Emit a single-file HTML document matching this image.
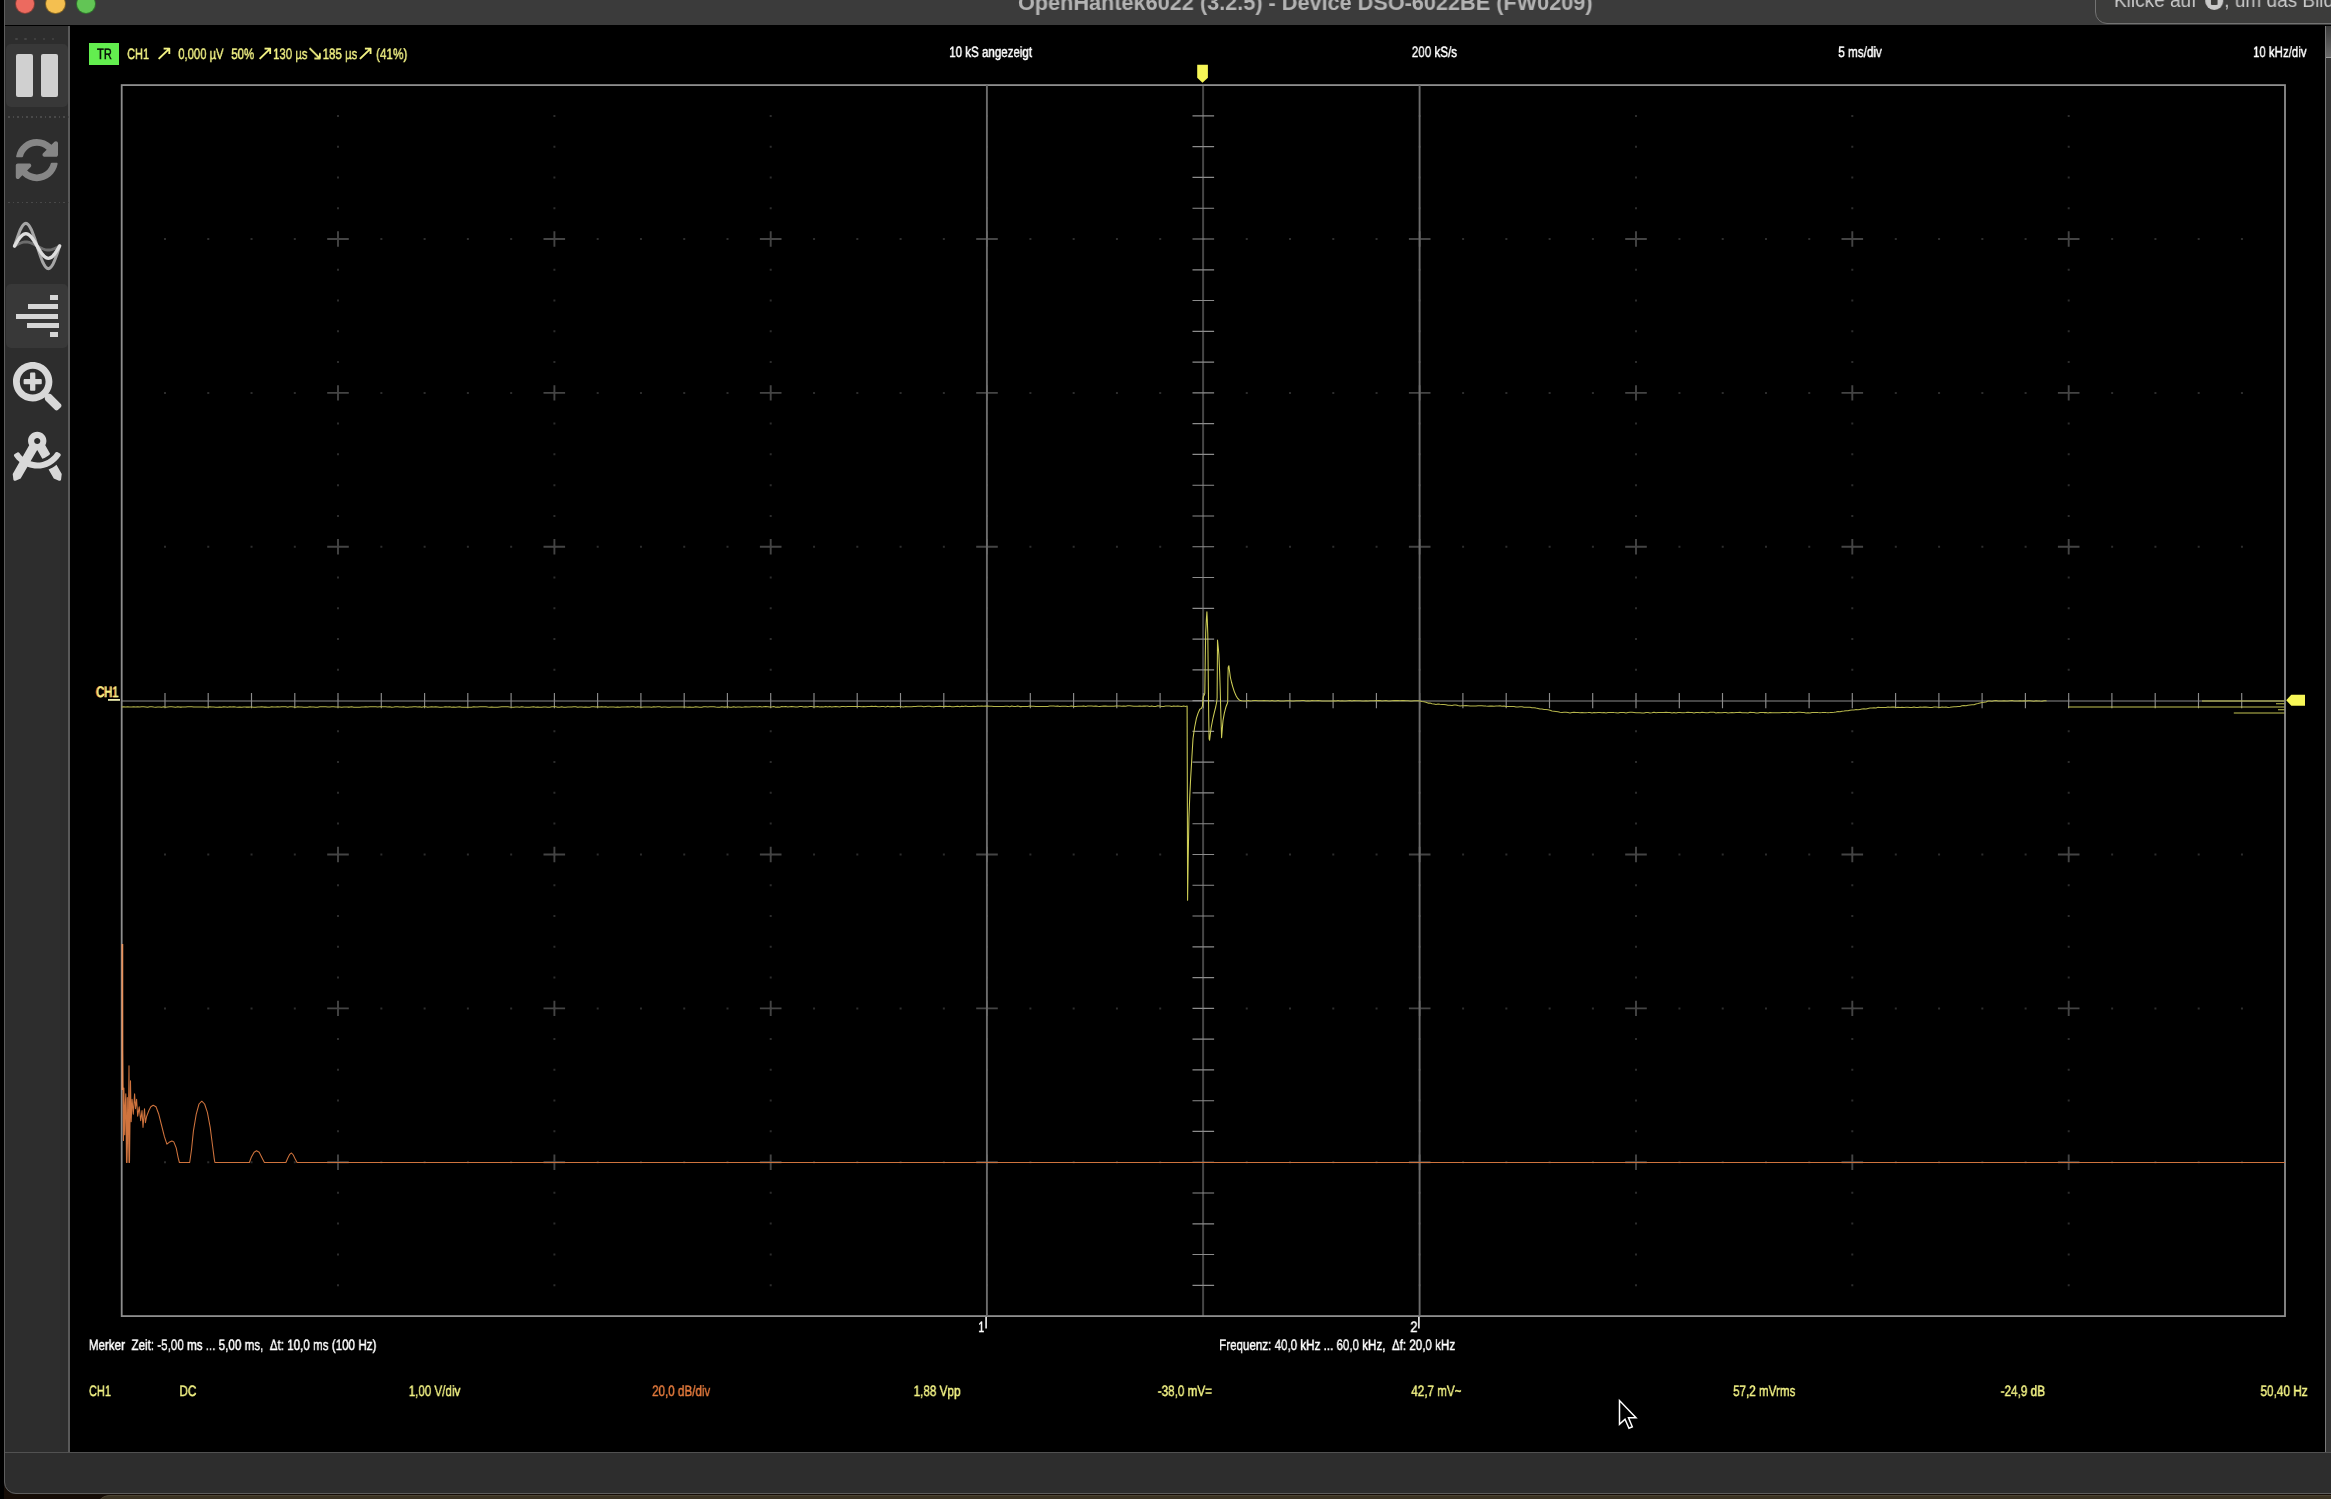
<!DOCTYPE html>
<html lang="de"><head><meta charset="utf-8"><title>OpenHantek6022</title>
<style>
html,body{margin:0;padding:0;background:#000}
body{width:2331px;height:1499px;position:relative;overflow:hidden;font-family:"Liberation Sans","DejaVu Sans",sans-serif}
#desk{position:absolute;left:4px;top:1480px;width:2331px;height:19px;background:#150c06}
#desk2{position:absolute;left:96px;top:1495px;width:2300px;height:30px;border-radius:14px;background:#3b3323;border-top:1px solid #4d4535}
#win{position:absolute;left:4px;top:-40px;width:2400px;height:1533.5px;background:#000;border-radius:0 0 0 12px;overflow:hidden;}
#winborder{position:absolute;left:4px;top:-40px;width:2400px;height:1533.8px;box-sizing:border-box;border:1.3px solid #5e5e5e;border-radius:0 0 0 12px;z-index:5;pointer-events:none}
#title{position:absolute;left:0;top:40px;width:100%;height:25px;background:#3b3b3b}
#tl span{position:absolute;top:-5.5px;width:18.4px;height:18.4px;border-radius:50%}
#ttext{will-change:transform;position:absolute;left:1013.6px;top:-10.3px;font-weight:bold;font-size:22px;color:#b4b4b4;white-space:nowrap;transform-origin:0 0;transform:scaleX(0.985)}
#tip{position:absolute;left:2090.6px;top:-20px;width:300px;height:43.5px;background:#3c3c3b;border:1px solid #737373;border-radius:0 0 0 12px;box-sizing:border-box}
#tiptext{will-change:transform;position:absolute;left:2110px;top:-10.9px;font-size:20px;color:#c9c9c9;white-space:nowrap;transform-origin:0 0;transform:scaleX(0.95)}
#rec{display:inline-block;width:19px;height:18px;border-radius:50%;background:#c9c9c9;vertical-align:-3px;position:relative;margin:0 1px 0 3.8px}
#rec i{position:absolute;left:5.8px;top:5.5px;width:7.4px;height:7px;background:#3c3c3b;border-radius:1px}
#side{position:absolute;left:1px;top:66px;width:63px;height:1427px;background:#2d2d2d;border-right:2px solid #595959}
#status{position:absolute;left:0;top:1492px;width:100%;height:42px;background:#2d2d2d;border-top:1px solid #515151}
#rpanel{position:absolute;left:2321px;top:66px;width:20px;height:1427px;background:#343434;border-left:1.5px solid #7a7a7a}
#rpanel div{height:31px;background:linear-gradient(#3c3c3c,#6a6a6a);border-bottom:1.5px solid #9a9a9a}
.btnbg{position:absolute;left:1px;width:62px;background:#383838;border-radius:5px}
.sep{position:absolute;left:3.2px;width:61px;height:1.6px;background:repeating-linear-gradient(90deg,#494949 0,#494949 1.6px,transparent 1.6px,transparent 4.6px)}
.hd{position:absolute;top:11.5px;width:2.6px;height:2.6px;border-radius:50%;background:#454545}
.pb{position:absolute;top:28px;width:17.5px;height:43px;border-radius:2px;background:#d0d0d0}
.sb{position:absolute;height:5.1px;background:#d6d6d6}
svg{position:absolute;left:0;top:0}
.t{position:absolute;left:0;top:0;will-change:transform;white-space:nowrap;-webkit-text-stroke:0.45px;text-rendering:geometricPrecision;line-height:1;transform-origin:0 0;letter-spacing:0}
.ar{font-family:"DejaVu Sans",sans-serif;font-size:21px;-webkit-text-stroke:0}
</style></head><body>
<div id="desk"></div><div id="desk2"></div>
<div id="win">
 <div id="title">
  <div id="tl"><span style="left:11.9px;background:#ec6a5f;box-shadow:0 0 0 0.9px #8e4038"></span><span style="left:42.2px;background:#f4bf50;box-shadow:0 0 0 0.9px #8a6a24"></span><span style="left:72.6px;background:#62c555;box-shadow:0 0 0 0.9px #2f7a2c"></span></div>
  <div id="ttext">OpenHantek6022 (3.2.5) - Device DSO-6022BE (FW0209)</div>
  <div id="tip"></div>
  <div id="tiptext">Klicke auf <span id="rec"><i></i></span>, um das Bildschirmvideo zu stoppen</div>
 </div>
 <div id="side">
  <i class="hd" style="left:10.2px"></i><i class="hd" style="left:19.4px"></i><i class="hd" style="left:28.6px"></i><i class="hd" style="left:37.7px"></i><i class="hd" style="left:46.9px"></i>
  <div class="btnbg" style="top:17.5px;height:63px"></div>
  <i class="pb" style="left:10.8px"></i><i class="pb" style="left:35.7px"></i>
  <div class="sep" style="top:90.3px"></div> <div class="sep" style="top:175.7px"></div>
  <div class="btnbg" style="top:258px;height:64px"></div>
  <i class="sb" style="left:44.7px;top:269px;width:8.8px"></i>
  <i class="sb" style="left:22.7px;top:278.2px;width:30.8px"></i>
  <i class="sb" style="left:10.8px;top:287.5px;width:42.7px"></i>
  <i class="sb" style="left:22px;top:296.9px;width:31.5px"></i>
  <i class="sb" style="left:44.7px;top:306.2px;width:8.8px"></i>
 </div>
 <div id="rpanel"><div></div></div>
 <div id="status"></div>
</div>
<div id="winborder"></div>
<svg width="2331" height="1499" viewBox="0 0 2331 1499">
 <g transform="translate(15.1 138.3) scale(0.0851)"><path fill="#868686" d="M370.72 133.28C339.458 104.008 298.888 87.962 255.848 88c-77.458.068-144.328 53.178-162.791 126.85-1.344 5.363-6.122 9.15-11.651 9.15H24.103c-7.498 0-13.194-6.807-11.807-14.176C33.933 94.924 134.813 8 256 8c66.448 0 126.791 26.136 171.315 68.685L463.03 40.97C478.149 25.851 504 36.559 504 57.941V192c0 13.255-10.745 24-24 24H345.941c-21.382 0-32.09-25.851-16.971-40.971l41.75-41.749zM32 296h134.059c21.382 0 32.09 25.851 16.971 40.971l-41.75 41.75c31.262 29.273 71.835 45.319 114.876 45.28 77.418-.07 144.315-53.144 162.787-126.849 1.344-5.363 6.122-9.15 11.651-9.15h57.304c7.498 0 13.194 6.807 11.807 14.176C478.067 417.076 377.187 504 256 504c-66.448 0-126.791-26.136-171.315-68.685L48.97 471.03C33.851 486.149 8 475.441 8 454.059V320c0-13.255 10.745-24 24-24z"/></g>
 <g fill="none" stroke-linecap="round"><path d="M14.6 246 15.7 245.4 16.9 244.8 18 244.2 19.1 243.6 20.2 243.2 21.4 242.8 22.5 242.4 23.6 242.2 24.7 242 25.9 242 27 242 28.1 242.2 29.2 242.4 30.3 242.8 31.5 243.2 32.6 243.6 33.7 244.2 34.9 244.8 36 245.4 37.1 246 38.2 246.6 39.4 247.2 40.5 247.8 41.6 248.4 42.7 248.8 43.9 249.2 45 249.6 46.1 249.8 47.2 250 48.4 250 49.5 250 50.6 249.8 51.7 249.6 52.9 249.2 54 248.8 55.1 248.4 56.2 247.8 57.4 247.2 58.5 246.6 59.6 246" stroke="#6c6c6c" stroke-width="2.8"/><path d="M14.6 246 15.7 242.5 16.9 239 18 235.7 19.1 232.7 20.2 230 21.4 227.7 22.5 225.9 23.6 224.5 24.7 223.7 25.9 223.4 27 223.7 28.1 224.5 29.2 225.9 30.3 227.7 31.5 230 32.6 232.7 33.7 235.7 34.9 239 36 242.5 37.1 246 38.2 249.5 39.4 253 40.5 256.3 41.6 259.3 42.7 262 43.9 264.3 45 266.1 46.1 267.5 47.2 268.3 48.4 268.6 49.5 268.3 50.6 267.5 51.7 266.1 52.9 264.3 54 262 55.1 259.3 56.2 256.3 57.4 253 58.5 249.5 59.6 246" stroke="#a6a6a6" stroke-width="3"/><path d="M14.6 246 15.7 244.1 16.9 242.2 18 240.4 19.1 238.8 20.2 237.3 21.4 236 22.5 235 23.6 234.3 24.7 233.9 25.9 233.7 27 233.9 28.1 234.3 29.2 235 30.3 236 31.5 237.3 32.6 238.8 33.7 240.4 34.9 242.2 36 244.1 37.1 246 38.2 247.9 39.4 249.8 40.5 251.6 41.6 253.2 42.7 254.7 43.9 256 45 257 46.1 257.7 47.2 258.1 48.4 258.3 49.5 258.1 50.6 257.7 51.7 257 52.9 256 54 254.7 55.1 253.2 56.2 251.6 57.4 249.8 58.5 247.9 59.6 246" stroke="#dedede" stroke-width="3.4"/></g>
 <g transform="translate(13 362) scale(0.0947)"><path fill="#d8d8d8" d="M304 192v32c0 6.6-5.4 12-12 12h-56v56c0 6.6-5.4 12-12 12h-32c-6.6 0-12-5.4-12-12v-56h-56c-6.6 0-12-5.4-12-12v-32c0-6.6 5.4-12 12-12h56v-56c0-6.6 5.4-12 12-12h32c6.6 0 12 5.4 12 12v56h56c6.6 0 12 5.4 12 12zm201 284.7L476.7 505c-9.4 9.4-24.6 9.4-33.9 0L343 405.3c-4.5-4.5-7-10.6-7-17V372c-35.3 27.600-79.700 44-128 44C93.100 416 0 322.900 0 208S93.100 0 208 0s208 93.100 208 208c0 48.300-16.400 92.700-44 128h16.300c6.400 0 12.500 2.500 17 7l99.700 99.700c9.300 9.400 9.300 24.600 0 34zM344 208c0-75.200-60.800-136-136-136S72 132.800 72 208s60.800 136 136 136 136-60.800 136-136z"/></g>
 <g transform="translate(12.7 431.8) scale(0.0958)"><path fill="#d8d8d8" d="M457.01 344.42c-25.05 20.33-52.63 37.18-82.54 49.05l54.38 94.19 53.95 23.040c9.810 4.190 20.890-2.210 22.170-12.800l7.020-58.250-54.980-95.230zm42.490-94.560c4.860-7.670 1.890-17.990-6.050-22.390l-28.070-15.570c-7.480-4.150-16.610-1.460-21.260 5.720C403.010 281.150 332.250 320 256 320c-23.930 0-47.230-4.250-69.410-11.530l67.360-116.680c.7.020 1.340.21 2.040.21s1.350-.19 2.040-.21l51.090 88.500c31.230-8.960 59.560-25.750 82.610-48.920l-51.790-89.710C347.390 128.030 352 112.630 352 96c0-53.020-42.980-96-96-96s-96 42.980-96 96c0 16.630 4.610 32.030 12.050 45.660l-68.300 118.310c-12.550-11.610-23.960-24.590-33.680-39-4.790-7.100-13.970-9.620-21.380-5.330l-27.750 16.070c-7.850 4.540-10.630 14.900-5.640 22.470 15.570 23.640 34.690 44.210 55.980 62.020L0 439.660l7.020 58.250c1.280 10.590 12.360 16.990 22.170 12.800l53.950-23.040 70.800-122.630C186.130 377.280 220.620 384 256 384c99.050 0 190.880-51.010 243.500-134.140zM256 64c17.670 0 32 14.330 32 32s-14.330 32-32 32-32-14.330-32-32 14.330-32 32-32z"/></g>
 <g stroke="#2c2c2c" stroke-width="2" fill="none"><line x1="164" y1="239" x2="2284" y2="239" stroke-dasharray="2 41.27"/><line x1="164" y1="392.9" x2="2284" y2="392.9" stroke-dasharray="2 41.27"/><line x1="164" y1="546.7" x2="2284" y2="546.7" stroke-dasharray="2 41.27"/><line x1="164" y1="854.5" x2="2284" y2="854.5" stroke-dasharray="2 41.27"/><line x1="164" y1="1008.4" x2="2284" y2="1008.4" stroke-dasharray="2 41.27"/><line x1="164" y1="1162.2" x2="2284" y2="1162.2" stroke-dasharray="2 41.27"/><line x1="338" y1="114.9" x2="338" y2="1315.1" stroke-dasharray="2 28.77"/><line x1="554.4" y1="114.9" x2="554.4" y2="1315.1" stroke-dasharray="2 28.77"/><line x1="770.7" y1="114.9" x2="770.7" y2="1315.1" stroke-dasharray="2 28.77"/><line x1="987" y1="114.9" x2="987" y2="1315.1" stroke-dasharray="2 28.77"/><line x1="1419.7" y1="114.9" x2="1419.7" y2="1315.1" stroke-dasharray="2 28.77"/><line x1="1636" y1="114.9" x2="1636" y2="1315.1" stroke-dasharray="2 28.77"/><line x1="1852.3" y1="114.9" x2="1852.3" y2="1315.1" stroke-dasharray="2 28.77"/><line x1="2068.7" y1="114.9" x2="2068.7" y2="1315.1" stroke-dasharray="2 28.77"/></g>
 <path d="M327.2 239h21.6M338 231.3v15.4M327.2 392.9h21.6M338 385.2v15.4M327.2 546.7h21.6M338 539v15.4M327.2 854.5h21.6M338 846.8v15.4M327.2 1008.4h21.6M338 1000.7v15.4M327.2 1162.2h21.6M338 1154.5v15.4M543.5 239h21.6M554.4 231.3v15.4M543.5 392.9h21.6M554.4 385.2v15.4M543.5 546.7h21.6M554.4 539v15.4M543.5 854.5h21.6M554.4 846.8v15.4M543.5 1008.4h21.6M554.4 1000.7v15.4M543.5 1162.2h21.6M554.4 1154.5v15.4M759.9 239h21.6M770.7 231.3v15.4M759.9 392.9h21.6M770.7 385.2v15.4M759.9 546.7h21.6M770.7 539v15.4M759.9 854.5h21.6M770.7 846.8v15.4M759.9 1008.4h21.6M770.7 1000.7v15.4M759.9 1162.2h21.6M770.7 1154.5v15.4M976.2 239h21.6M987 231.3v15.4M976.2 392.9h21.6M987 385.2v15.4M976.2 546.7h21.6M987 539v15.4M976.2 854.5h21.6M987 846.8v15.4M976.2 1008.4h21.6M987 1000.7v15.4M976.2 1162.2h21.6M987 1154.5v15.4M1408.9 239h21.6M1419.7 231.3v15.4M1408.9 392.9h21.6M1419.7 385.2v15.4M1408.9 546.7h21.6M1419.7 539v15.4M1408.9 854.5h21.6M1419.7 846.8v15.4M1408.9 1008.4h21.6M1419.7 1000.7v15.4M1408.9 1162.2h21.6M1419.7 1154.5v15.4M1625.2 239h21.6M1636 231.3v15.4M1625.2 392.9h21.6M1636 385.2v15.4M1625.2 546.7h21.6M1636 539v15.4M1625.2 854.5h21.6M1636 846.8v15.4M1625.2 1008.4h21.6M1636 1000.7v15.4M1625.2 1162.2h21.6M1636 1154.5v15.4M1841.5 239h21.6M1852.3 231.3v15.4M1841.5 392.9h21.6M1852.3 385.2v15.4M1841.5 546.7h21.6M1852.3 539v15.4M1841.5 854.5h21.6M1852.3 846.8v15.4M1841.5 1008.4h21.6M1852.3 1000.7v15.4M1841.5 1162.2h21.6M1852.3 1154.5v15.4M2057.9 239h21.6M2068.7 231.3v15.4M2057.9 392.9h21.6M2068.7 385.2v15.4M2057.9 546.7h21.6M2068.7 539v15.4M2057.9 854.5h21.6M2068.7 846.8v15.4M2057.9 1008.4h21.6M2068.7 1000.7v15.4M2057.9 1162.2h21.6M2068.7 1154.5v15.4" stroke="#444444" stroke-width="1.9" fill="none"/>
 <path d="M121.7 701H2285M1203.1 85.1V1316.1" stroke="#464646" stroke-width="2" fill="none"/>
 <path d="M165 692.9v15.4M208.2 692.9v15.4M251.5 692.9v15.4M294.8 692.9v15.4M338 692.9v15.4M381.3 692.9v15.4M424.6 692.9v15.4M467.8 692.9v15.4M511.1 692.9v15.4M554.4 692.9v15.4M597.6 692.9v15.4M640.9 692.9v15.4M684.2 692.9v15.4M727.4 692.9v15.4M770.7 692.9v15.4M814 692.9v15.4M857.2 692.9v15.4M900.5 692.9v15.4M943.8 692.9v15.4M987 692.9v15.4M1030.3 692.9v15.4M1073.6 692.9v15.4M1116.8 692.9v15.4M1160.1 692.9v15.4M1203.4 692.9v15.4M1246.6 692.9v15.4M1289.9 692.9v15.4M1333.1 692.9v15.4M1376.4 692.9v15.4M1419.7 692.9v15.4M1462.9 692.9v15.4M1506.2 692.9v15.4M1549.5 692.9v15.4M1592.7 692.9v15.4M1636 692.9v15.4M1679.3 692.9v15.4M1722.5 692.9v15.4M1765.8 692.9v15.4M1809.1 692.9v15.4M1852.3 692.9v15.4M1895.6 692.9v15.4M1938.9 692.9v15.4M1982.1 692.9v15.4M2025.4 692.9v15.4M2068.7 692.9v15.4M2111.9 692.9v15.4M2155.2 692.9v15.4M2198.5 692.9v15.4M2241.7 692.9v15.4M1192.5 115.9h21.6M1192.5 146.6h21.6M1192.5 177.4h21.6M1192.5 208.2h21.6M1192.5 239h21.6M1192.5 269.8h21.6M1192.5 300.5h21.6M1192.5 331.3h21.6M1192.5 362.1h21.6M1192.5 392.9h21.6M1192.5 423.6h21.6M1192.5 454.4h21.6M1192.5 485.2h21.6M1192.5 516h21.6M1192.5 546.7h21.6M1192.5 577.5h21.6M1192.5 608.3h21.6M1192.5 639.1h21.6M1192.5 669.8h21.6M1192.5 700.6h21.6M1192.5 731.4h21.6M1192.5 762.1h21.6M1192.5 792.9h21.6M1192.5 823.7h21.6M1192.5 854.5h21.6M1192.5 885.2h21.6M1192.5 916h21.6M1192.5 946.8h21.6M1192.5 977.6h21.6M1192.5 1008.4h21.6M1192.5 1039.1h21.6M1192.5 1069.9h21.6M1192.5 1100.7h21.6M1192.5 1131.4h21.6M1192.5 1162.2h21.6M1192.5 1193h21.6M1192.5 1223.8h21.6M1192.5 1254.5h21.6M1192.5 1285.3h21.6" stroke="#8c8c8c" stroke-width="1.15" fill="none"/>
 <rect x="121.7" y="85.1" width="2163.3" height="1231" fill="none" stroke="#8e8e8e" stroke-width="1.8"/>
 <path d="M986.9 85.1V1316.1M1419.6 85.1V1316.1" stroke="#6c6c6c" stroke-width="1.9" fill="none"/>
 <path d="M986.1 1317.1V1328.6M1418.9 1317.1V1328.6" stroke="#f2f2f2" stroke-width="1.6" fill="none"/>
 <path d="M122.4 943.9 122.6 1050.8 123 1088.1 123.5 1140.4 123.9 1088.1 124.7 1134.8 125.2 1106.8 125.8 1093.7 126.5 1162.5 127.3 1097.5 128 1162.5 129 1065.7 129.5 1162.5 130.5 1080.7 131.2 1121.8 132.1 1099.3 133.3 1114.3 134.6 1093.7 135.5 1108.7 136.6 1099.3 137.7 1116.2 139.2 1106.8 140.7 1120.8 142 1110.5 143 1127.4 144.5 1108.7 145.4 1122.7 146.7 1116.2 148.9 1110.5 150.8 1106.8 153.2 1105.3 156 1106.8 158.8 1114.3 161.6 1125.5 164.4 1136.7 166.9 1144.2 169.1 1142.3 171.9 1141 173.8 1141.9 176.2 1147.9 178.1 1157.3 179.4 1162.5 189.7 1162.5 191.5 1149.8 193.4 1131.1 196.2 1114.3 199 1104 201.8 1101.2 204.6 1104 207.4 1112.4 210.2 1127.4 212.6 1146 214.3 1159.1 214.9 1162.5 249.4 1162.5 251.3 1157.3 254.1 1152.2 256.5 1150.7 259.2 1152.2 262.2 1158.2 264.4 1162.5 285.9 1162.5 287.7 1158.2 289.6 1154.4 291.5 1153 293.3 1155 295.2 1159.1 297.1 1162.5 2285 1162.5" stroke="#cf733d" stroke-width="1.05" fill="none" stroke-linejoin="round"/>
 <path d="M122.4 944V1090" stroke="#e8905a" stroke-width="1.7" fill="none"/>
 <path d="M121.7 706.9 123.7 706.8 125.7 707.1 127.7 706.7 129.7 707 131.7 706.9 133.7 706.7 135.7 707 137.7 706.7 139.7 707 141.7 706.7 143.7 706.7 145.7 706.9 147.7 707.2 149.7 706.7 151.7 706.8 153.7 707.1 155.7 707.3 157.7 707.1 159.7 706.9 161.7 707.3 163.7 706.7 165.7 707.3 167.7 706.9 169.7 706.8 171.7 706.7 173.7 706.9 175.7 707.2 177.7 706.8 179.7 707.1 181.7 707.1 183.7 706.9 185.7 707 187.7 706.7 189.7 706.7 191.7 706.8 193.7 707.1 195.7 706.9 197.7 706.9 199.7 707.1 201.7 707 203.7 706.9 205.7 707.2 207.7 707.1 209.7 706.8 211.7 707.1 213.7 707 215.7 707.3 217.7 707.2 219.7 706.9 221.7 707.3 223.7 706.7 225.7 706.9 227.7 707.2 229.7 706.8 231.7 707 233.7 706.7 235.7 707.1 237.7 707.2 239.7 707.1 241.7 707.3 243.7 706.9 245.7 707.1 247.7 707.1 249.7 707.1 251.7 707 253.7 707.2 255.7 707.3 257.7 707 259.7 707.1 261.7 706.7 263.7 707.1 265.7 707.1 267.7 707.3 269.7 707.2 271.7 706.8 273.7 706.9 275.7 707.1 277.7 706.7 279.7 707 281.7 706.8 283.7 706.7 285.7 706.7 287.7 707.2 289.7 706.7 291.7 706.8 293.7 706.9 295.7 707.3 297.7 706.7 299.7 707 301.7 707 303.7 707.3 305.7 707.2 307.7 707.3 309.7 706.8 311.7 706.9 313.7 706.9 315.7 707.3 317.7 707.3 319.7 706.8 321.7 706.8 323.7 706.8 325.7 706.8 327.7 707 329.7 707.1 331.7 706.8 333.7 706.7 335.7 706.9 337.7 706.9 339.7 707 341.7 707.3 343.7 707.1 345.7 707 347.7 707.1 349.7 707.1 351.7 706.7 353.7 707.3 355.7 707.2 357.7 707.3 359.7 707.2 361.7 706.9 363.7 706.9 365.7 706.7 367.7 707.1 369.7 706.7 371.7 706.7 373.7 706.8 375.7 706.8 377.7 706.9 379.7 706.7 381.7 706.7 383.7 706.8 385.7 706.7 387.7 706.9 389.7 706.7 391.7 707.3 393.7 707.1 395.7 706.8 397.7 706.8 399.7 706.9 401.7 706.9 403.7 706.7 405.7 707.2 407.7 707.3 409.7 707 411.7 707 413.7 706.7 415.7 706.7 417.7 706.9 419.7 706.8 421.7 707.2 423.7 706.8 425.7 706.7 427.7 707.3 429.7 707 431.7 706.8 433.7 707 435.7 706.7 437.7 707 439.7 707.3 441.7 707.3 443.7 707.1 445.7 706.8 447.7 706.9 449.7 706.8 451.7 707.2 453.7 707 455.7 707.2 457.7 706.9 459.7 706.8 461.7 707.2 463.7 707.3 465.7 707.2 467.7 707.2 469.7 707.2 471.7 707.2 473.7 706.8 475.7 707 477.7 706.9 479.7 706.7 481.7 706.7 483.7 706.8 485.7 706.8 487.7 707.1 489.7 707.3 491.7 707 493.7 707.3 495.7 707.3 497.7 707.3 499.7 706.9 501.7 706.8 503.7 706.8 505.7 706.8 507.7 706.8 509.7 707.1 511.7 707.3 513.7 707.2 515.7 707 517.7 707.1 519.7 707.2 521.7 706.7 523.7 707.1 525.7 707.3 527.7 707.2 529.7 707.2 531.7 707 533.7 706.8 535.7 707.2 537.7 706.9 539.7 707.2 541.7 707.3 543.7 706.9 545.7 706.9 547.7 707.3 549.7 707.2 551.7 706.8 553.7 706.7 555.7 706.8 557.7 707.3 559.7 707.2 561.7 706.8 563.7 707.2 565.7 707.3 567.7 707.1 569.7 706.9 571.7 707 573.7 706.7 575.7 706.7 577.7 707.3 579.7 707.1 581.7 707 583.7 707.3 585.7 707 587.7 707.3 589.7 707.2 591.7 706.8 593.7 706.8 595.7 706.9 597.7 706.8 599.7 707.1 601.7 706.8 603.7 706.9 605.7 706.7 607.7 707.3 609.7 706.9 611.7 707 613.7 707.1 615.7 707.3 617.7 706.9 619.7 707.3 621.7 707 623.7 707 625.7 707 627.7 706.7 629.7 707 631.7 706.8 633.7 706.7 635.7 707.2 637.7 706.8 639.7 707 641.7 707.2 643.7 707 645.7 706.9 647.7 707 649.7 707 651.7 707.2 653.7 706.7 655.7 707 657.7 706.8 659.7 706.8 661.7 707.2 663.7 707 665.7 707 667.7 707.2 669.7 707.3 671.7 707 673.7 707.1 675.7 707 677.7 707 679.7 707.1 681.7 707 683.7 707 685.7 707 687.7 707.3 689.7 707.1 691.7 707.3 693.7 707.3 695.7 706.8 697.7 707 699.7 707.3 701.7 707.2 703.7 706.7 705.7 706.7 707.7 706.9 709.7 706.7 711.7 706.8 713.7 706.7 715.7 707.1 717.7 707.2 719.7 707.2 721.7 706.7 723.7 707.1 725.7 707.1 727.7 706.7 729.7 707.2 731.7 707.3 733.7 706.7 735.7 707.2 737.7 706.9 739.7 706.9 741.7 707.3 743.7 707.1 745.7 706.7 747.7 706.9 749.7 706.9 751.7 706.8 753.7 706.7 755.7 706.8 757.7 707 759.7 706.5 761.7 706.9 763.7 706.8 765.7 706.5 767.7 706.7 769.7 706.9 771.7 706.9 773.7 706.5 775.7 707.2 777.7 707 779.7 707.2 781.7 706.6 783.7 706.7 785.7 706.5 787.7 707 789.7 706.7 791.7 706.6 793.7 706.8 795.7 707.1 797.7 707 799.7 706.6 801.7 706.5 803.7 707.1 805.7 706.8 807.7 706.9 809.7 706.5 811.7 706.5 813.7 706.9 815.7 706.7 817.7 706.5 819.7 707.1 821.7 706.8 823.7 707 825.7 706.4 827.7 707 829.7 706.4 831.7 707 833.7 706.7 835.7 706.6 837.7 706.8 839.7 707 841.7 706.5 843.7 706.4 845.7 706.7 847.7 706.5 849.7 706.4 851.7 706.4 853.7 706.4 855.7 706.5 857.7 706.5 859.7 706.5 861.7 706.8 863.7 706.5 865.7 706.7 867.7 706.4 869.7 706.5 871.7 706.3 873.7 706.5 875.7 706.3 877.7 706.8 879.7 706.7 881.7 706.4 883.7 706.6 885.7 706.9 887.7 706.3 889.7 706.8 891.7 706.6 893.7 706.6 895.7 706.8 897.7 706.5 899.7 706.6 901.7 706.7 903.7 706.9 905.7 706.5 907.7 706.8 909.7 706.7 911.7 706.7 913.7 706.5 915.7 706.4 917.7 706.2 919.7 706.3 921.7 706.2 923.7 706.7 925.7 706.4 927.7 706.3 929.7 706.2 931.7 706.8 933.7 706.8 935.7 706.6 937.7 706.4 939.7 706.3 941.7 706.4 943.7 706.5 945.7 706.3 947.7 706.4 949.7 706.3 951.7 706.8 953.7 706.8 955.7 706.5 957.7 706.3 959.7 706.8 961.7 706.3 963.7 706.4 965.7 706.1 967.7 706.4 969.7 706.4 971.7 706.4 973.7 706.2 975.7 706.4 977.7 706.1 979.7 706.3 981.7 706.1 983.7 706.3 985.7 706.1 987.7 706.1 989.7 706.3 991.7 706.2 993.7 706.5 995.7 706.4 997.7 706.6 999.7 706.5 1001.7 706.5 1003.7 706.6 1005.7 706.3 1007.7 706.2 1009.7 706.7 1011.7 706.1 1013.7 706.5 1015.7 706.4 1017.7 706 1019.7 706.6 1021.7 706.6 1023.7 706.4 1025.7 706.5 1027.7 706.5 1029.7 706.1 1031.7 706.3 1033.7 706.3 1035.7 706.5 1037.7 706.5 1039.7 706.5 1041.7 706.4 1043.7 706.6 1045.7 706.4 1047.7 706.4 1049.7 706.1 1051.7 705.9 1053.7 706 1055.7 706.2 1057.7 706 1059.7 706.5 1061.7 706.3 1063.7 706.3 1065.7 706.3 1067.7 706.4 1069.7 706.2 1071.7 705.9 1073.7 706.4 1075.7 706.4 1077.7 706.2 1079.7 706.2 1081.7 706.3 1083.7 705.9 1085.7 706.4 1087.7 706 1089.7 705.9 1091.7 706 1093.7 706.3 1095.7 706 1097.7 706.3 1099.7 706.5 1101.7 706.2 1103.7 706.1 1105.7 706.1 1107.7 706.3 1109.7 706.3 1111.7 706.2 1113.7 706.2 1115.7 705.9 1117.7 705.9 1119.7 706 1121.7 706.3 1123.7 706 1125.7 706.2 1127.7 705.8 1129.7 705.8 1131.7 706 1133.7 706.3 1135.7 706.3 1137.7 706.3 1139.7 706 1141.7 706.2 1143.7 706.1 1145.7 706.1 1147.7 705.9 1149.7 706.4 1151.7 705.9 1153.7 706.5 1155.7 706.5 1157.7 705.8 1159.7 706.1 1161.7 706.4 1163.7 706.5 1165.7 706.1 1167.7 706 1169.7 705.9 1171.7 706.5 1173.7 705.9 1175.7 706.2 1177.7 705.9 1179.7 706.2 1181.7 706.5 1183.7 705.9 1185.7 706.4 1186.8 706.1M1241.8 700.7 1242 700.8 1244 701 1246 700.9 1248 700.6 1250 701 1252 700.8 1254 700.5 1256 700.5 1258 700.8 1260 700.8 1262 700.7 1264 700.6 1266 700.7 1268 700.7 1270 701 1272 700.5 1274 701 1276 701 1278 700.6 1280 701.1 1282 700.9 1284 701 1286 700.7 1288 700.7 1290 700.7 1292 701.1 1294 700.9 1296 700.7 1298 700.8 1300 700.7 1302 700.5 1304 700.6 1306 701 1308 700.7 1310 701.1 1312 700.6 1314 700.7 1316 700.8 1318 700.6 1320 700.7 1322 701.1 1324 701 1326 701 1328 700.9 1330 701 1332 701.1 1334 700.8 1336 700.9 1338 700.5 1340 700.9 1342 700.8 1344 701 1346 700.9 1348 700.7 1350 700.5 1352 701.1 1354 700.6 1356 700.8 1358 700.7 1360 700.7 1362 700.9 1364 701.1 1366 700.7 1368 700.9 1370 700.7 1372 700.8 1374 700.7 1376 700.6 1378 700.6 1380 700.6 1382 701 1384 700.8 1386 700.6 1388 701 1390 701.1 1392 700.8 1394 700.6 1396 700.6 1398 700.6 1400 700.7 1402 700.6 1404 700.6 1406 700.7 1408 700.8 1410 701 1412 700.9 1414 700.7 1416 700.7 1418 700.8 1420 701 1422 701.4 1424 701.7 1426 702.3 1428 703.1 1430 703.1 1432 703.8 1434 704.1 1436 704.4 1438 704.1 1440 704.3 1442 704.4 1444 704.6 1446 704.8 1448 705.2 1450 705.2 1452 705.4 1454 705 1456 705.1 1458 705.6 1460 705.9 1462 705.7 1464 705.8 1466 705.4 1468 705.7 1470 706 1472 706 1474 706 1476 706.1 1478 705.7 1480 705.7 1482 705.7 1484 705.9 1486 706.1 1488 706.2 1490 706.1 1492 706.1 1494 706.2 1496 706 1498 706.1 1500 705.8 1502 706.3 1504 706 1506 706.6 1508 706.5 1510 706.4 1512 706.4 1514 706.6 1516 706.9 1518 707 1520 706.8 1522 706.8 1524 707.2 1526 707.3 1528 707.3 1530 707.3 1532 707.8 1534 707.7 1536 708.1 1538 708.4 1540 708.9 1542 709 1544 709.4 1546 709.6 1548 709.8 1550 710.2 1552 711.1 1554 711.3 1556 711.5 1558 711.7 1560 712.2 1562 712.4 1564 712.3 1566 712.3 1568 712.6 1570 712.9 1572 712.4 1574 712.3 1576 712.5 1578 712.6 1580 712.7 1582 712.4 1584 712.8 1586 712.7 1588 712.6 1590 712.4 1592 712.9 1594 712.5 1596 712.8 1598 712.4 1600 712.4 1602 712.8 1604 712.5 1606 712.9 1608 712.6 1610 712.4 1612 712.4 1614 712.6 1616 712.7 1618 712.9 1620 712.4 1622 712.5 1624 712.4 1626 712.9 1628 712.4 1630 712.3 1632 712.3 1634 712.5 1636 712.8 1638 712.8 1640 712.7 1642 712.9 1644 712.9 1646 712.5 1648 712.4 1650 712.9 1652 712.7 1654 712.3 1656 712.7 1658 712.5 1660 712.5 1662 712.5 1664 712.4 1666 712.3 1668 712.5 1670 712.5 1672 712.9 1674 712.4 1676 712.9 1678 712.4 1680 712.5 1682 712.8 1684 712.8 1686 712.6 1688 712.3 1690 712.6 1692 712.5 1694 712.9 1696 712.4 1698 712.5 1700 712.8 1702 712.3 1704 712.5 1706 712.8 1708 712.8 1710 712.3 1712 712.3 1714 712.3 1716 712.9 1718 712.5 1720 712.7 1722 712.8 1724 712.5 1726 712.5 1728 712.9 1730 712.7 1732 712.5 1734 712.7 1736 712.5 1738 712.5 1740 712.3 1742 712.8 1744 712.8 1746 712.7 1748 712.9 1750 712.3 1752 712.4 1754 712.6 1756 712.9 1758 712.9 1760 712.5 1762 712.5 1764 712.6 1766 712.6 1768 712.9 1770 712.4 1772 712.8 1774 712.7 1776 712.8 1778 712.8 1780 712.7 1782 712.5 1784 712.5 1786 712.5 1788 712.8 1790 712.3 1792 712.4 1794 712.8 1796 712.4 1798 712.3 1800 712.3 1802 712.6 1804 712.5 1806 712.9 1808 712.8 1810 712.9 1812 712.5 1814 712.4 1816 712.4 1818 712.6 1820 712.7 1822 712.6 1824 712.4 1826 712.6 1828 712.7 1830 712.6 1832 712.4 1834 712.3 1836 712 1838 711.5 1840 711.7 1842 711.2 1844 711.1 1846 710.8 1848 710.8 1850 710.3 1852 710.1 1854 709.9 1856 709.6 1858 709.8 1860 709.4 1862 709 1864 708.8 1866 708.9 1868 708.4 1870 708 1872 708.1 1874 707.8 1876 707.9 1878 707.3 1880 707.5 1882 707.6 1884 707.5 1886 707.5 1888 707 1890 707.2 1892 707.1 1894 707.1 1896 707.6 1898 707.3 1900 707.6 1902 707.2 1904 707.5 1906 707.3 1908 707.2 1910 707.5 1912 707.6 1914 707.1 1916 707.4 1918 707.4 1920 707.1 1922 707.2 1924 707.1 1926 707.1 1928 707.2 1930 707.4 1932 707.4 1934 707.1 1936 707 1938 707.2 1940 707.4 1942 707.1 1944 707.2 1946 707.1 1948 707.5 1950 707.3 1952 706.9 1954 706.7 1956 706.7 1958 706.5 1960 706.4 1962 705.8 1964 705.6 1966 705.7 1968 705.3 1970 705 1972 704.8 1974 704.7 1976 703.9 1978 703.6 1980 703 1982 702.5 1984 702.3 1986 702 1988 701.1 1990 700.9 1992 701.2 1994 700.8 1996 700.6 1998 701.1 2000 700.9 2002 701.1 2004 700.8 2006 701.1 2008 700.9 2010 700.7 2012 700.6 2014 700.9 2016 701 2018 701.1 2020 700.7 2022 701 2024 700.8 2026 700.9 2028 700.7 2030 700.8 2032 700.9 2034 701.2 2036 700.7 2038 700.9 2040 701.1 2042 701.2 2044 700.7 2046 700.7 2046.5 700.9" stroke="#b6b64c" stroke-width="1.05" fill="none" stroke-linejoin="round"/>
 <path d="M1186.8 706.1 1187.1 706.1 1187.6 900.3 1188.2 859 1188.9 818.2 1189.8 795.5 1190.7 777.4 1191.9 757 1193 738.8 1194.6 727.5 1196.4 718.4 1198 713.4 1199.8 709.3 1201.4 708.4 1202.5 705.9 1203.2 696.8 1204.1 695.2 1204.8 693.4 1205.3 657.1 1205.7 632.2 1206.4 618.6 1206.9 611.8 1207.3 619.7 1207.8 634.4 1208.2 670.7 1208.7 716.1 1209.1 738.8 1209.6 740.2 1210.3 734.3 1211.2 727.5 1212.7 719.5 1214.3 712.7 1215.7 707 1216.6 702.5 1217.1 698 1217.3 670.7 1217.5 640.1 1218.2 646.9 1218.9 654.9 1219.6 670.7 1220.2 688.9 1220.9 716.1 1221.6 737.7 1222.3 728.6 1223 720.7 1224.3 713.4 1225.9 707 1227 704.3 1227.7 702.1 1227.9 679.8 1228.2 667.3 1228.9 665.8 1229.5 670.7 1230.4 677.5 1231.6 682.5 1232.7 686.6 1234.3 691.6 1236.1 695.7 1237.7 698.4 1239.5 700.2 1241.8 700.7" stroke="#cece56" stroke-width="1.05" fill="none" stroke-linejoin="round"/>
 <path d="M2068.2 707H2284.5M2202 700.9H2284.5M2276 703.8H2284.5M2278 709.7H2284.5M2233.8 713H2284.5" stroke="#c4c452" stroke-width="1.05" fill="none"/>
 <path d="M108 699.9H120" stroke="#eeeeb0" stroke-width="1.8"/>
 <path d="M1197.2 64.8H1207.9V77.8L1202.5 82.8L1197.2 77.8Z" fill="#f7f757"/>
 <path d="M2286.2 700.2L2291.3 694.8H2305V705.7H2291.3Z" fill="#f7f757"/>
 <path d="M1619.5 1400.5V1424.2L1625 1419.2L1629 1428.3L1632.3 1426.8L1628.5 1417.8H1636Z" fill="#000" stroke="#fff" stroke-width="1.5" stroke-linejoin="miter"/>
</svg>
<div style="position:absolute;left:89px;top:43.2px;width:30.2px;height:21.7px;background:#63ee4f"></div>
<span class="t" id="t_tr" style="color:#000;font-size:15px;transform:translate(97.00px,47.00px) scaleX(0.7392)">TR</span>
<span class="t" id="t_ch" style="color:#f2f284;font-size:15px;transform:translate(127.14px,47.00px) scaleX(0.7276)">CH1</span>
<span class="t" id="t_v" style="color:#f2f284;font-size:15px;transform:translate(178.31px,47.00px) scaleX(0.7502)">0,000 µV</span>
<span class="t" id="t_50" style="color:#f2f284;font-size:15px;transform:translate(231.31px,47.00px) scaleX(0.7593)">50%</span>
<span class="t" id="t_130" style="color:#f2f284;font-size:15px;transform:translate(273.04px,47.00px) scaleX(0.7614)">130 µs</span>
<span class="t" id="t_185" style="color:#f2f284;font-size:15px;transform:translate(322.63px,47.00px) scaleX(0.7659)">185 µs</span>
<span class="t" id="t_41" style="color:#f2f284;font-size:15px;transform:translate(376.01px,47.00px) scaleX(0.7818)">(41%)</span>
<span class="t" id="t_ks" style="color:#ffffff;font-size:15px;transform:translate(949.33px,45.00px) scaleX(0.7681)">10 kS angezeigt</span>
<span class="t" id="t_sr" style="color:#ffffff;font-size:15px;transform:translate(1411.81px,45.00px) scaleX(0.7757)">200 kS/s</span>
<span class="t" id="t_tb" style="color:#ffffff;font-size:15px;transform:translate(1838.30px,45.00px) scaleX(0.7803)">5 ms/div</span>
<span class="t" id="t_fb" style="color:#ffffff;font-size:15px;transform:translate(2253.04px,45.00px) scaleX(0.7639)">10 kHz/div</span>
<span class="t" id="t_mk" style="color:#ffffff;font-size:15px;transform:translate(88.82px,1338.00px) scaleX(0.7751)">Merker  Zeit: -5,00 ms ... 5,00 ms,  Δt: 10,0 ms (100 Hz)</span>
<span class="t" id="t_fq" style="color:#ffffff;font-size:15px;transform:translate(1219.13px,1338.00px) scaleX(0.7733)">Frequenz: 40,0 kHz ... 60,0 kHz,  Δf: 20,0 kHz</span>
<span class="t" id="b_ch" style="color:#f2f284;font-size:15px;transform:translate(89.04px,1384.00px) scaleX(0.7276)">CH1</span>
<span class="t" id="b_dc" style="color:#f2f284;font-size:15px;transform:translate(179.41px,1384.00px) scaleX(0.7852)">DC</span>
<span class="t" id="b_v" style="color:#f2f284;font-size:15px;transform:translate(408.73px,1384.00px) scaleX(0.7727)">1,00 V/div</span>
<span class="t" id="b_db" style="color:#e2793c;font-size:15px;transform:translate(652.11px,1384.00px) scaleX(0.7746)">20,0 dB/div</span>
<span class="t" id="b_pp" style="color:#f2f284;font-size:15px;transform:translate(913.62px,1384.00px) scaleX(0.7813)">1,88 Vpp</span>
<span class="t" id="b_dcv" style="color:#f2f284;font-size:15px;transform:translate(1157.71px,1384.00px) scaleX(0.7811)">-38,0 mV=</span>
<span class="t" id="b_ac" style="color:#f2f284;font-size:15px;transform:translate(1411.30px,1384.00px) scaleX(0.7782)">42,7 mV~</span>
<span class="t" id="b_rms" style="color:#f2f284;font-size:15px;transform:translate(1733.11px,1384.00px) scaleX(0.7762)">57,2 mVrms</span>
<span class="t" id="b_dB" style="color:#f2f284;font-size:15px;transform:translate(2000.61px,1384.00px) scaleX(0.7839)">-24,9 dB</span>
<span class="t" id="b_hz" style="color:#f2f284;font-size:15px;transform:translate(2260.50px,1384.00px) scaleX(0.7848)">50,40 Hz</span>
<span class="t" id="m_1" style="color:#ffffff;font-size:15px;transform:translate(978.53px,1320.00px) scaleX(0.6714)">1</span>
<span class="t" id="m_2" style="color:#ffffff;font-size:15px;transform:translate(1410.37px,1320.00px) scaleX(0.8552)">2</span>
<span class="t" id="l_cho" style="color:#e2793c;font-size:15px;transform:translate(95.53px,685.00px) scaleX(0.7379)">CH1</span>
<span class="t" id="l_ch" style="color:#f2f284;font-size:15px;transform:translate(96.53px,685.00px) scaleX(0.7379)">CH1</span>
<span class="t ar" id="a1" style="color:#f2f284;transform:translate(154.91px,42.80px) scaleX(1.0298)">↗</span>
<span class="t ar" id="a2" style="color:#f2f284;transform:translate(256.04px,42.80px) scaleX(1.0213)">↗</span>
<span class="t ar" id="a3" style="color:#f2f284;transform:translate(306.01px,42.80px) scaleX(0.9957)">↘</span>
<span class="t ar" id="a4" style="color:#f2f284;transform:translate(356.21px,42.80px) scaleX(1.0298)">↗</span>
</body></html>
